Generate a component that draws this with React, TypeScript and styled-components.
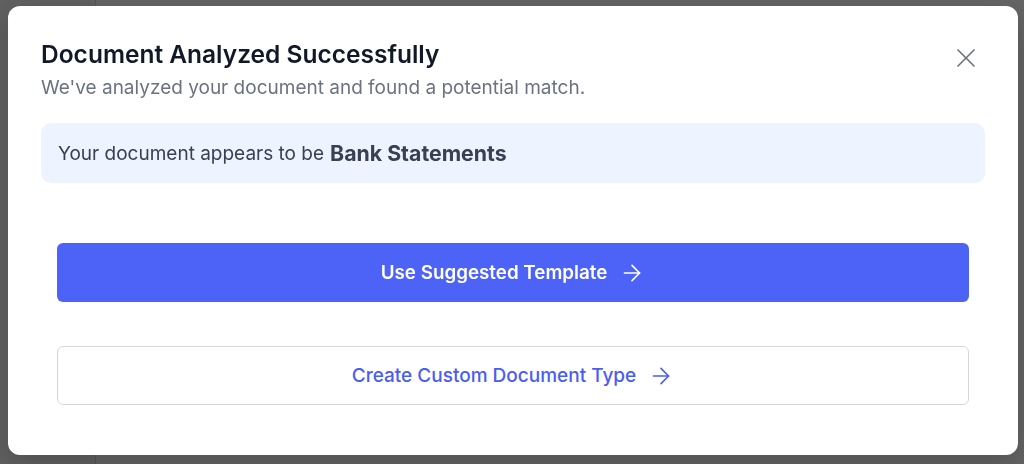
import { ArrowRight, X } from 'lucide-react'
import styled, { createGlobalStyle } from 'styled-components'

const GlobalStyle = createGlobalStyle`
  * { box-sizing: border-box; }
  html, body { margin: 0; padding: 0; }
  body {
    font-family: Inter, "Noto Sans", sans-serif;
    -webkit-font-smoothing: antialiased;
  }
`

const Page = styled.div`
  display: flex;
  height: 464px;
  background-color: #ffffff;
`

const Sidebar = styled.div`
  width: 96px;
  background-color: #f0f0f0;
  border-right: 1px solid #d6d6d6;
`

const Main = styled.div`
  flex: 1;
  background-color: #fafafa;
`

const Overlay = styled.div`
  position: fixed;
  inset: 0;
  background-color: rgba(0, 0, 0, 0.6);
  display: flex;
  align-items: flex-start;
  padding: 6px 6px 0 8px;
`

const Dialog = styled.div`
  position: relative;
  flex: 1;
  height: 449px;
  background-color: #ffffff;
  border-radius: 12px;
  padding: 32px 33px 0;
  box-shadow: 0 10px 30px rgba(0, 0, 0, 0.2);
`

const Header = styled.div`
  display: flex;
  flex-direction: column;
  gap: 4px;
`

const Title = styled.h2`
  margin: 0;
  font-size: 24.5px;
  line-height: 32px;
  font-weight: 600;
  color: #111827;
`

const Subtitle = styled.p`
  margin: 0;
  font-size: 19px;
  line-height: 28px;
  color: #6b7280;
`

const CloseButton = styled.button`
  position: absolute;
  top: 36px;
  right: 36px;
  padding: 0;
  border: none;
  background: none;
  color: #6b7280;
  display: flex;
  cursor: pointer;
`

const MatchBox = styled.div`
  margin-top: 21px;
  height: 60px;
  display: flex;
  align-items: center;
  padding: 0 17px;
  background-color: #eef4ff;
  border-radius: 10px;
  font-size: 19px;
  color: #374151;
`

const MatchName = styled.strong`
  margin-left: 6px;
  font-size: 21.3px;
  font-weight: 700;
`

const Actions = styled.div`
  margin-top: 60px;
  padding: 0 16px;
  display: flex;
  flex-direction: column;
  gap: 44px;
`

const ActionButton = styled.button<{ primary?: boolean }>`
  height: 59px;
  width: 100%;
  display: flex;
  align-items: center;
  justify-content: center;
  gap: 12px;
  border-radius: 6px;
  font-family: inherit;
  font-size: ${({ primary }) => (primary ? '18.8px' : '19px')};
  font-weight: ${({ primary }) => (primary ? 600 : 500)};
  cursor: pointer;
  background-color: ${({ primary }) => (primary ? '#4d63f7' : '#ffffff')};
  color: ${({ primary }) => (primary ? '#ffffff' : '#4a5df2')};
  border: ${({ primary }) => (primary ? 'none' : '1.5px solid #d4d6db')};
`

export default function App() {
  return (
    <>
      <GlobalStyle />
      <Page>
        <Sidebar />
        <Main />
      </Page>
      <Overlay>
        <Dialog>
          <Header>
            <Title>Document Analyzed Successfully</Title>
            <Subtitle>We've analyzed your document and found a potential match.</Subtitle>
          </Header>
          <CloseButton aria-label="Close">
            <X size={32} strokeWidth={1.25} />
          </CloseButton>
          <MatchBox>
            Your document appears to be
            <MatchName>Bank Statements</MatchName>
          </MatchBox>
          <Actions>
            <ActionButton primary>
              Use Suggested Template
              <ArrowRight size={26} strokeWidth={1.5} />
            </ActionButton>
            <ActionButton>
              Create Custom Document Type
              <ArrowRight size={26} strokeWidth={1.5} />
            </ActionButton>
          </Actions>
        </Dialog>
      </Overlay>
    </>
  )
}
